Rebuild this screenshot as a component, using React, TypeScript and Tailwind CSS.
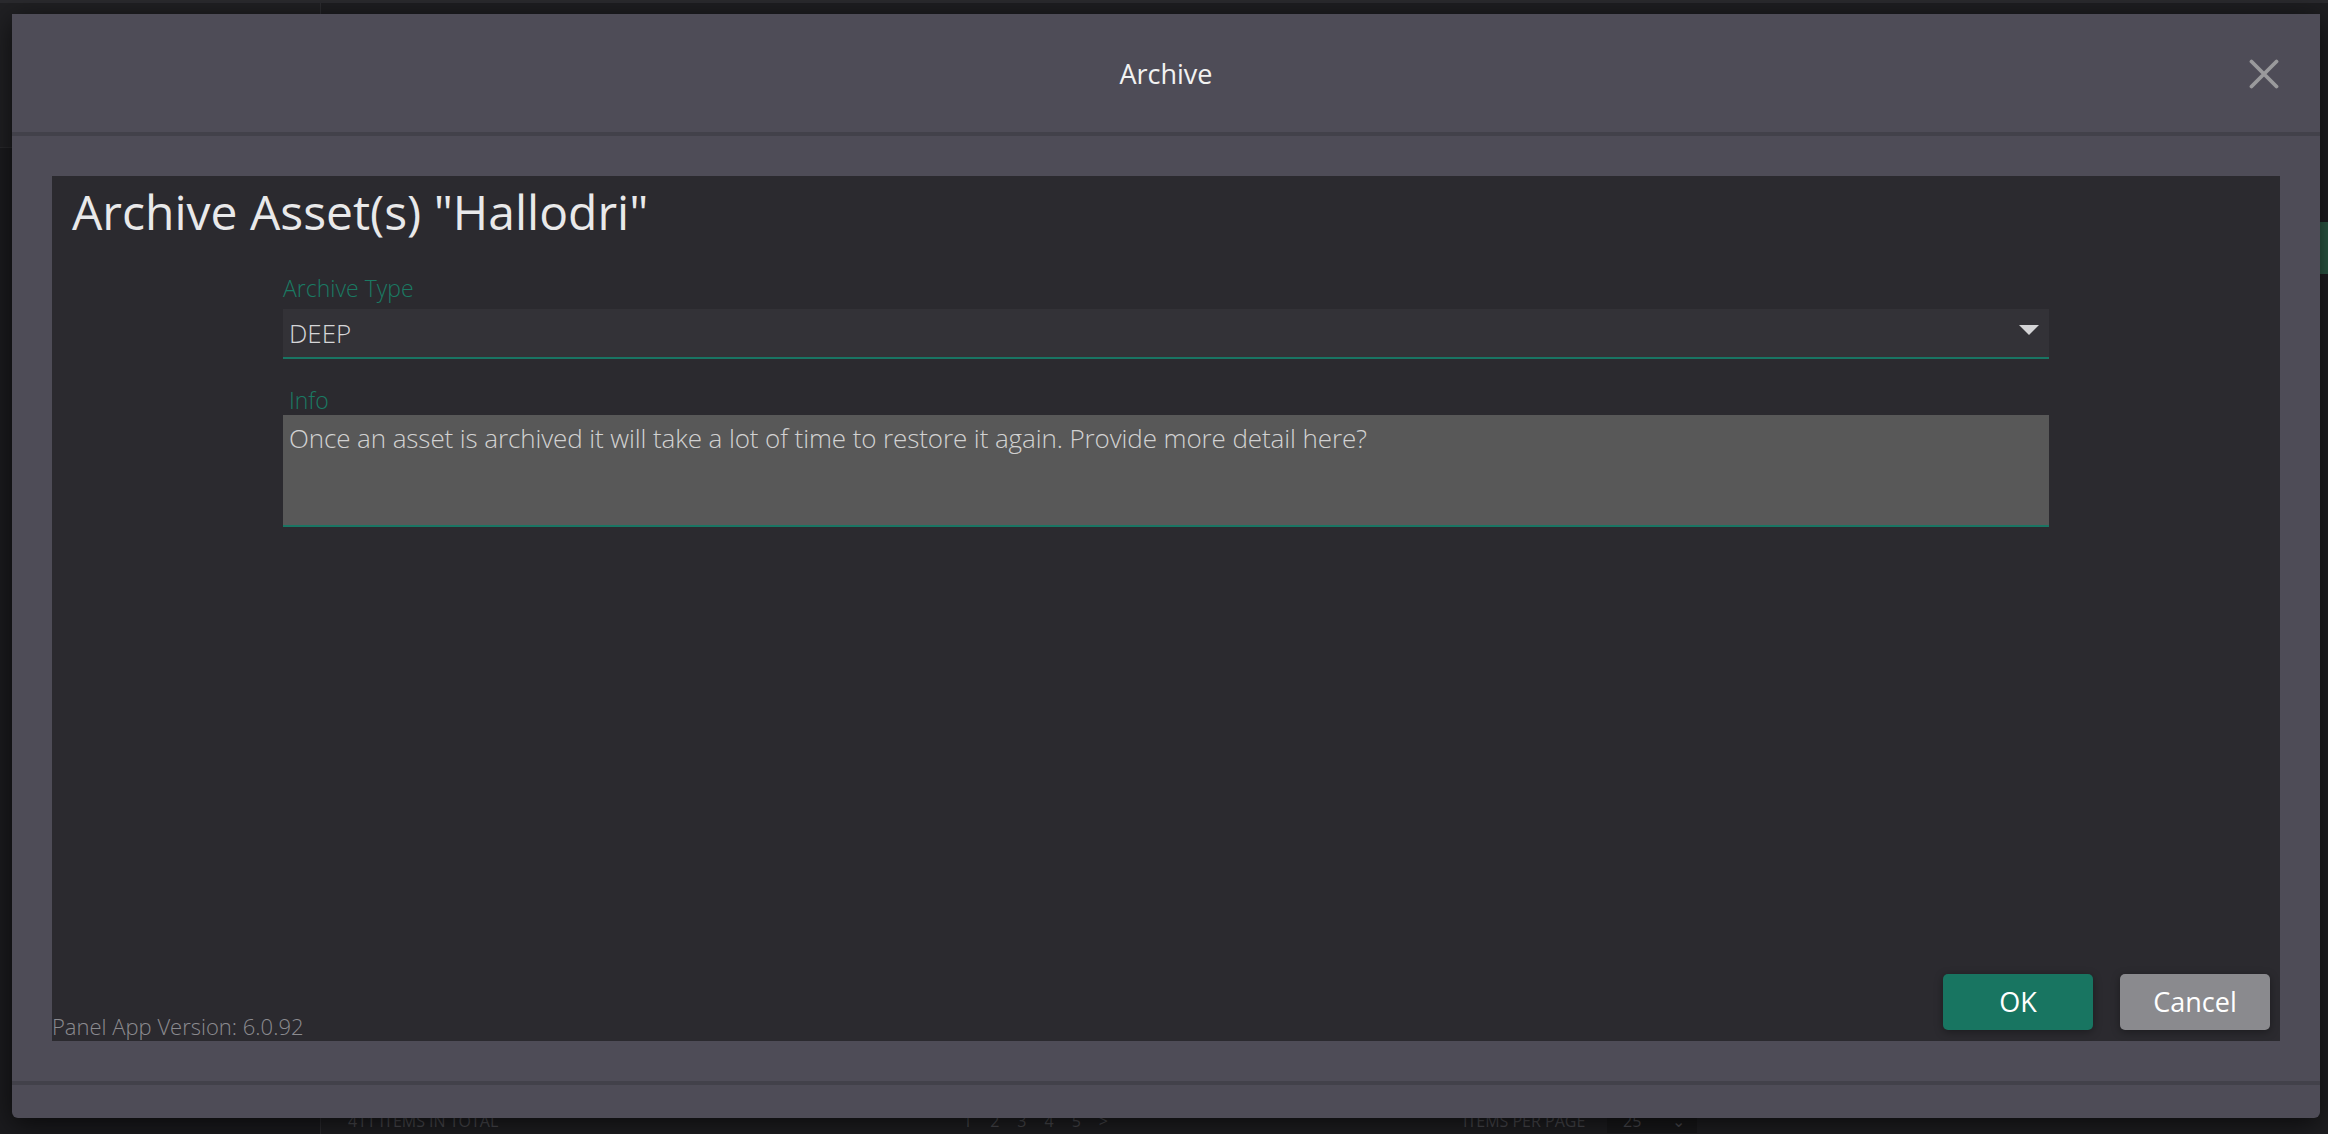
import { useState } from 'react';

function Backdrop() {
    return (
        <div className="absolute inset-0 flex flex-col">
            <div className="h-[3px] bg-[#2a2a2e]" />
            <div className="flex flex-1">
                <div className="w-[320px] flex flex-col">
                    <div className="h-[145px] bg-[#202023] border-b border-[#29292c]" />
                    <div className="flex-1 bg-[#1b1b1e]" />
                </div>
                <div className="w-px bg-[#2c2c30]" />
                <div className="flex-1 flex flex-col bg-[#1e1e21]">
                    <div className="flex-1" />
                    <div className="h-[34px] flex items-end pb-[1px] text-[16px] text-[#4a4a4f]">
                        <span className="ml-[27px] w-[615px]">411 ITEMS IN TOTAL</span>
                        <span className="w-[500px] flex gap-[18px]">
                            <span>1</span><span>2</span><span>3</span><span>4</span><span>5</span><span>&gt;</span>
                        </span>
                        <span className="w-[144px]">ITEMS PER PAGE</span>
                        <span className="w-[90px] flex justify-between bg-[#18181a] pl-[16px] pr-[12px]">
                            <span>25</span><span>⌄</span>
                        </span>
                    </div>
                </div>
                <div className="w-[8px] flex flex-col bg-[#1e1e21]">
                    <div className="h-[219px]" />
                    <div className="h-[52px] bg-[#2c5a46]" />
                </div>
            </div>
        </div>
    );
}

function CloseIcon() {
    return (
        <svg width="30" height="30" viewBox="0 0 30 30" fill="none">
            <path d="M2.5 2.5 L27.5 27.5 M27.5 2.5 L2.5 27.5" stroke="#9a9a9c" strokeWidth="3.8" strokeLinecap="round" />
        </svg>
    );
}

export default function App() {
    const [archiveType] = useState('DEEP');
    const [info, setInfo] = useState(
        'Once an asset is archived it will take a lot of time to restore it again. Provide more detail here?'
    );

    return (
        <div className="relative w-[2328px] h-[1134px] overflow-hidden bg-[#1d1d20] font-['Open_Sans',sans-serif]">
            <Backdrop />

            <div className="relative pt-[14px] pl-[12px]">
                <div className="w-[2308px] h-[1104px] flex flex-col rounded-b-[6px] bg-[#4e4c57] shadow-[0_6px_28px_rgba(0,0,0,0.65)]">
                    {/* header */}
                    <div className="relative h-[118px] flex items-center justify-center pt-[2px]">
                        <span className="text-[27px] text-[#f2f2f2]">Archive</span>
                        <button className="absolute right-[41px] top-[45px]">
                            <CloseIcon />
                        </button>
                    </div>
                    <div className="h-[4px] bg-[#42414a]" />

                    {/* body */}
                    <div className="flex-1 flex p-[40px]">
                        <div className="flex-1 flex flex-col bg-[#2b2a2f]">
                            <h1 className="pt-[3px] pl-[20px] text-[48px] leading-[65px] text-[#e9e9ea]">
                                Archive Asset(s) "Hallodri"
                            </h1>

                            <div className="mx-auto w-[1766px] mt-[29px]">
                                <label className="block mb-[6px] text-[23px] leading-[30px] font-light text-[#1a7a63]">
                                    Archive Type
                                </label>
                                <div className="h-[50px] flex items-center justify-between pl-[6px] pr-[10px] bg-[#333237] border-b-2 border-[#197563]">
                                    <span className="text-[26px] font-light text-[#d6d6d8]">{archiveType}</span>
                                    <svg width="20" height="10" viewBox="0 0 20 10" className="mb-[6px]">
                                        <path d="M0 0 H20 L10 10 Z" fill="#d4d4d6" />
                                    </svg>
                                </div>

                                <label className="block mt-[26px] pl-[6px] text-[23px] leading-[30px] font-light text-[#1a7a63]">
                                    Info
                                </label>
                                <textarea
                                    value={info}
                                    onChange={(e) => setInfo(e.target.value)}
                                    className="block w-full h-[112px] resize-none outline-none px-[6px] pt-[6px] text-[26px] leading-[35px] font-light tracking-[-0.1px] text-[#d2d2d2] bg-[#585858] border-b-2 border-[#197563]"
                                />
                            </div>

                            <div className="flex-1" />

                            <div className="flex items-end justify-between">
                                <span className="text-[22px] leading-[29px] font-light text-[#8b8b8f]">
                                    Panel App Version: 6.0.92
                                </span>
                                <div className="flex gap-[27px] mb-[11px] mr-[10px]">
                                    <button className="w-[150px] h-[56px] rounded-[5px] bg-[#187561] text-[27px] text-white shadow-[0_2px_8px_rgba(0,0,0,0.35)]">
                                        OK
                                    </button>
                                    <button className="w-[150px] h-[56px] rounded-[5px] bg-[#8a8a8e] text-[27px] text-white shadow-[0_2px_8px_rgba(0,0,0,0.35)]">
                                        Cancel
                                    </button>
                                </div>
                            </div>
                        </div>
                    </div>

                    {/* footer */}
                    <div className="h-[4px] bg-[#42414a]" />
                    <div className="h-[33px]" />
                </div>
            </div>
        </div>
    );
}
